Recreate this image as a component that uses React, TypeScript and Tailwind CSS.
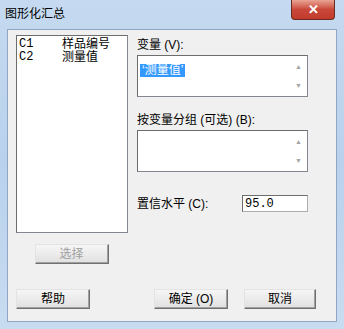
const FONT = "font-['Liberation_Sans','Noto_Sans_CJK_SC',sans-serif]";

function ScrollList({ children }: { children?: React.ReactNode }) {
  return (
    <div className="flex h-[42px] w-[171px] border border-[#828790] border-t-[#6d6d6d] border-l-[#6d6d6d] bg-white">
      <div className="flex-1 pl-[2px] pt-[1px]">{children}</div>
      <div className="flex w-[17px] flex-col items-center justify-between py-[7px] text-[7px] leading-none text-[#a6a6a6]">
        <span>▲</span>
        <span>▼</span>
      </div>
    </div>
  );
}

function Btn({ label, disabled, w = "w-[74px]" }: { label: string; disabled?: boolean; w?: string }) {
  return (
    <button
      className={`flex h-[20px] ${w} items-center justify-center border border-[#707070] border-t-[#e3e3e3] border-l-[#e3e3e3] bg-gradient-to-b from-[#f6f6f6] to-[#e0e0e0] text-[12px] leading-none shadow-[inset_-1px_-1px_0_#a0a0a0] ${
        disabled ? "text-[#a0a0a0]" : "text-black"
      }`}
    >
      {label}
    </button>
  );
}

export default function App() {
  return (
    <div className={`flex h-[329px] w-[344px] flex-col overflow-hidden bg-gradient-to-b from-[#c5daf0] via-[#b9d1ec] to-[#c8dcf1] ${FONT}`}>
      <div className="flex h-[29px] items-start justify-between">
        <p className="pl-[5px] pt-[8px] text-[12px] leading-none text-black">图形化汇总</p>
        <div className="mr-[9px] flex h-[20px] w-[44px] items-center justify-center rounded-b-[4px] border border-[#6b2a22] border-t-0 bg-gradient-to-b from-[#e8a393] via-[#c9473a] to-[#c13b2c] text-[13px] font-bold leading-none text-white">
          ✕
        </div>
      </div>

      <div className="mx-[7px] mb-[7px] flex flex-1 flex-col border border-[#8fa7c4] bg-[#f0f0f0]">
        <div className="flex pt-[5px]">
          <div className="ml-[8px] flex w-[112px] flex-col items-center">
            <div className="h-[198px] w-full border border-[#828790] border-t-[#6d6d6d] border-l-[#6d6d6d] bg-white px-[2px] pt-[2px] text-[12px] leading-[13px] text-black">
              <div className="flex">
                <span className="w-[43px] font-['Liberation_Mono',monospace]">C1</span>
                <span>样品编号</span>
              </div>
              <div className="flex">
                <span className="w-[43px] font-['Liberation_Mono',monospace]">C2</span>
                <span>测量值</span>
              </div>
            </div>
            <div className="mt-[11px] -ml-[1px]">
              <Btn label="选择" disabled />
            </div>
          </div>

          <div className="ml-[9px] flex flex-col">
            <p className="pt-[3px] text-[12px] leading-[14px] text-black">变量 (V):</p>
            <div className="mt-[3px]">
              <ScrollList>
                <span className="inline-block bg-[#3399ff] px-[2px] text-[12px] leading-[13px] text-white">‘测量值’</span>
              </ScrollList>
            </div>
            <p className="mt-[16px] text-[12px] leading-[14px] text-black">按变量分组 (可选) (B):</p>
            <div className="mt-[3px]">
              <ScrollList />
            </div>
            <div className="mt-[23px] flex items-center justify-between">
              <p className="text-[12px] leading-[14px] text-black">置信水平 (C):</p>
              <div className="flex h-[17px] w-[66px] items-center border border-[#abadb3] border-t-[#6d6d6d] border-l-[#6d6d6d] bg-white pl-[2px] font-['Liberation_Mono',monospace] text-[12px] leading-none text-black">
                95.0
              </div>
            </div>
          </div>
        </div>

        <div className="mt-auto mb-[12px] flex items-center px-[8px]">
          <Btn label="帮助" />
          <div className="ml-[64px]">
            <Btn label="确定 (O)" />
          </div>
          <div className="ml-[16px]">
            <Btn label="取消" w="w-[72px]" />
          </div>
        </div>
      </div>
    </div>
  );
}
